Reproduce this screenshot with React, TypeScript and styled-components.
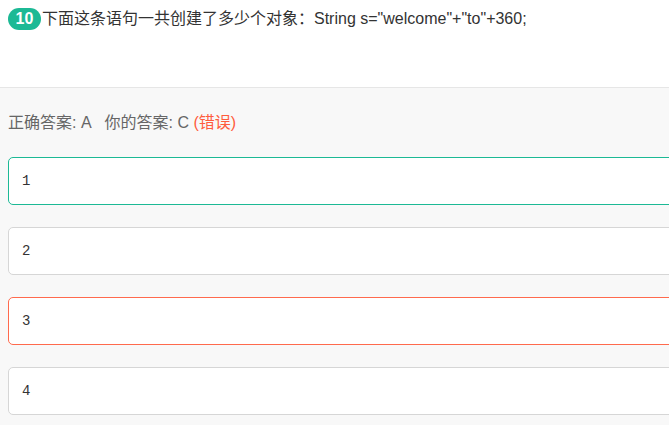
import React from "react";
import styled, { createGlobalStyle } from "styled-components";

const Global = createGlobalStyle`
  html, body { margin: 0; padding: 0; background: #f8f8f8; overflow: hidden; }
  body { font-family: "Liberation Sans", "Noto Sans CJK SC", sans-serif; }
`;

const Page = styled.div`
  width: 740px;
  min-height: 425px;
  background: #f8f8f8;
`;

const Header = styled.div`
  background: #fff;
  height: 87px;
  border-bottom: 1px solid #e6e6e6;
  box-sizing: content-box;
  padding: 8px 0 0 8px;
  box-sizing: border-box;
  height: 88px;
`;

const QuestionRow = styled.div`
  display: flex;
  align-items: center;
  height: 22px;
`;

const Badge = styled.span`
  display: inline-flex;
  align-items: center;
  justify-content: center;
  width: 33px;
  height: 22px;
  border-radius: 11px;
  background: #1cb995;
  color: #fff;
  font-size: 16px;
  font-weight: bold;
  margin-right: 1px;
`;

const QuestionText = styled.span`
  font-size: 16px;
  color: #333;
  line-height: 22px;
`;

const Body = styled.div`
  padding: 24px 0 0 8px;
`;

const AnswerLine = styled.div`
  height: 22px;
  line-height: 22px;
  font-size: 16px;
  color: #666;
  display: flex;
  gap: 13px;
`;

const Wrong = styled.span`
  color: #ff5c3d;
`;

const Options = styled.div`
  margin-top: 23px;
  display: flex;
  flex-direction: column;
  gap: 22px;
`;

const Option = styled.div<{ $state?: "right" | "wrong" }>`
  height: 48px;
  box-sizing: border-box;
  background: #fff;
  border: 1px solid
    ${(p) => (p.$state === "right" ? "#1cb995" : p.$state === "wrong" ? "#ff6a4d" : "#d6d6d6")};
  border-radius: 5px;
  display: flex;
  align-items: center;
  padding-left: 13px;
  font-family: "Liberation Mono", monospace;
  font-size: 14px;
  color: #333;
`;

export default function App() {
  return (
    <Page>
      <Global />
      <Header>
        <QuestionRow>
          <Badge>10</Badge>
          <QuestionText>下面这条语句一共创建了多少个对象：String s="welcome"+"to"+360;</QuestionText>
        </QuestionRow>
      </Header>
      <Body>
        <AnswerLine>
          <span>正确答案: A</span>
          <span>
            你的答案: C <Wrong>(错误)</Wrong>
          </span>
        </AnswerLine>
        <Options>
          <Option $state="right">1</Option>
          <Option>2</Option>
          <Option $state="wrong">3</Option>
          <Option>4</Option>
        </Options>
      </Body>
    </Page>
  );
}
